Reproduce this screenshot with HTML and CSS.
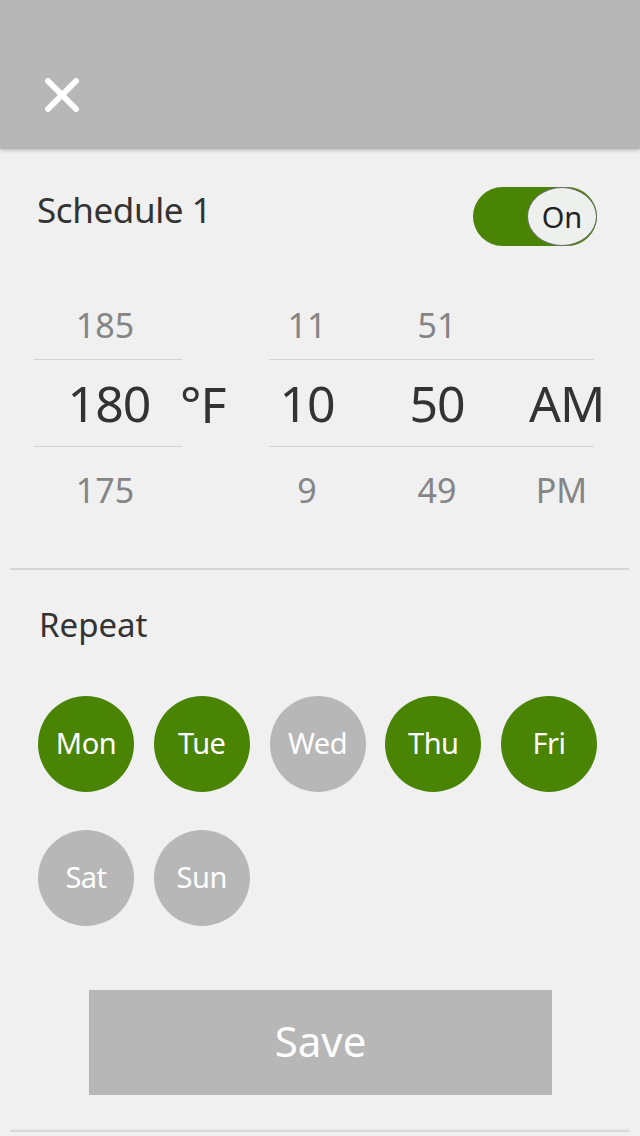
FILE: index.html
```html
<!DOCTYPE html>
<html lang="en">
<head>
<meta charset="utf-8">
<title>Schedule 1</title>
<link rel="stylesheet" href="styles.css">
</head>
<body>
<header class="topbar">
  <svg class="close-icon" width="34" height="34" viewBox="0 0 34 34" aria-label="Close">
    <line x1="3" y1="3" x2="31" y2="31"/>
    <line x1="31" y1="3" x2="3" y2="31"/>
  </svg>
</header>

<main class="content">
  <div class="schedule-row">
    <div class="schedule-title">Schedule 1</div>
    <div class="toggle">
      <div class="knob">On</div>
    </div>
  </div>

  <div class="picker">
    <div class="wheel temp">
      <div class="row top"><span>185</span></div>
      <div class="row mid"><span>180</span></div>
      <div class="row bot"><span>175</span></div>
    </div>
    <div class="unit">
      <div class="row top"></div>
      <div class="row mid unit-mid"><span>°F</span></div>
      <div class="row bot"></div>
    </div>
    <div class="wheel time">
      <div class="row top"><span>11</span><span>51</span><span></span></div>
      <div class="row mid"><span>10</span><span>50</span><span>AM</span></div>
      <div class="row bot"><span>9</span><span>49</span><span>PM</span></div>
    </div>
  </div>

  <div class="divider"></div>

  <div class="repeat-title">Repeat</div>

  <div class="days">
    <div class="day on">Mon</div>
    <div class="day on">Tue</div>
    <div class="day off">Wed</div>
    <div class="day on">Thu</div>
    <div class="day on">Fri</div>
    <div class="day off">Sat</div>
    <div class="day off">Sun</div>
  </div>

  <div class="save-wrap">
    <button class="save">Save</button>
  </div>

  <div class="bottom-line"></div>
</main>
</body>
</html>
```

FILE: styles.css
```css
* { box-sizing: border-box; }

html, body {
  margin: 0;
  padding: 0;
}

body {
  width: 640px;
  height: 1136px;
  overflow: hidden;
  background: #f0f0f0;
  font-family: "Noto Sans", "Open Sans", sans-serif;
  color: #333333;
}

.topbar {
  height: 149px;
  background: #b7b7b7;
  box-shadow: 0 2px 3px rgba(0, 0, 0, 0.18);
  padding: 78px 0 0 45px;
  position: relative;
  z-index: 1;
}

.close-icon {
  display: block;
}
.close-icon line {
  stroke: #ffffff;
  stroke-width: 6;
  stroke-linecap: round;
}

.schedule-row {
  display: flex;
  justify-content: space-between;
  align-items: flex-start;
  margin-top: 38px;
  padding: 0 43px 0 37px;
}

.schedule-title {
  font-size: 35px;
  line-height: 40px;
  margin-top: 3px;
  color: #333333;
  letter-spacing: -0.4px;
}

.toggle {
  width: 124px;
  height: 59px;
  border-radius: 30px;
  background: #4a8404;
  display: flex;
  justify-content: flex-end;
}

.knob {
  width: 70px;
  height: 59px;
  border-radius: 35px / 29.5px;
  background: #eef0ee;
  border: 1px solid #6b6b6b;
  display: flex;
  align-items: center;
  justify-content: center;
  font-size: 29px;
  color: #222222;
}

.picker {
  display: flex;
  margin-top: 45px;
  padding-left: 34px;
}

.row {
  display: grid;
  text-align: center;
  white-space: nowrap;
}
.row.top {
  height: 68px;
  line-height: 68px;
  font-size: 34px;
  color: #858585;
}
.row.mid {
  height: 88px;
  line-height: 87px;
  font-size: 50px;
  color: #333333;
  letter-spacing: -1px;
}
.row.bot {
  height: 86px;
  line-height: 86px;
  font-size: 34px;
  color: #858585;
}

.wheel .row.mid {
  border-top: 1.5px solid #d2d2d2;
  border-bottom: 1.5px solid #d2d2d2;
}

.temp {
  width: 148px;
}
.temp .row {
  grid-template-columns: 1fr;
  padding-right: 6px;
}
.temp .row.mid {
  padding-right: 0;
  padding-left: 2px;
}

.unit {
  width: 89px;
  margin-left: -2px;
}
.unit .row {
  text-align: left;
}
.unit-mid {
  padding-top: 1.5px;
  line-height: 80px;
  font-size: 48px;
  letter-spacing: -2px;
}

.time {
  width: 325px;
}
.time .row {
  grid-template-columns: 76px 184px 65px;
}

.divider {
  margin: 35px 11px 0 10px;
  height: 2px;
  background: #d6d6d6;
}

.repeat-title {
  margin-top: 35px;
  padding-left: 39px;
  font-size: 33px;
  line-height: 40px;
  color: #333333;
}

.days {
  display: flex;
  flex-wrap: wrap;
  width: 600px;
  padding-left: 38px;
  column-gap: 19.75px;
  row-gap: 38px;
  margin-top: 51px;
}

.day {
  width: 96px;
  height: 96px;
  border-radius: 50%;
  display: flex;
  align-items: center;
  justify-content: center;
  color: #ffffff;
  font-size: 29px;
  letter-spacing: -0.5px;
  padding-bottom: 3px;
}
.day.on { background: #4a8404; }
.day.off { background: #b7b7b7; }

.save-wrap {
  display: flex;
  justify-content: center;
  margin-top: 64px;
  padding-left: 1px;
}

.save {
  width: 463px;
  height: 105px;
  border: none;
  border-radius: 0;
  background: #b7b7b7;
  color: #ffffff;
  font-family: inherit;
  font-size: 42px;
  padding: 0 0 4px 0;
}

.bottom-line {
  margin: 35px 11px 0 10px;
  height: 2px;
  background: #d8d8d8;
  box-shadow: 0 -1px 2px rgba(0, 0, 0, 0.05);
}
```
